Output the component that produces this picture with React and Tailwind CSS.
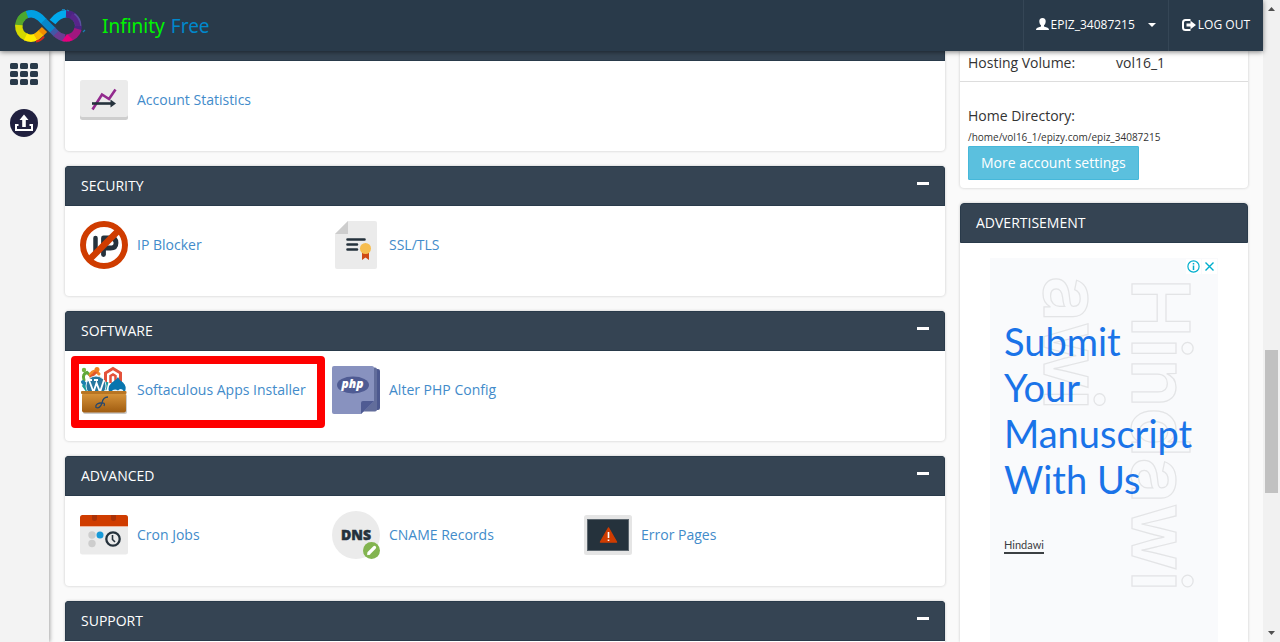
import { useState } from 'react';

const LogoMark = () => (
  <svg width="72" height="36" viewBox="0 0 72 36" fill="none" strokeWidth="7.400" aria-hidden="true">
    <path d="M4.900 19A12.200 12.200 0 0 1 9 9" stroke="#58a52c" />
    <path d="M6.500 12A12.200 12.200 0 0 1 13.500 6.200" stroke="#4ba82e" />
    <path d="M13 6.400Q20 4 26 9.500L30 13.500" stroke="#00a0e3" />
    <path d="M38.500 14Q45 5.500 53 5.800" stroke="#00a9ee" />
    <path d="M29.500 13L39 22.500" stroke="#0787c9" />
    <path d="M38.500 22L42.500 26" stroke="#4158a6" />
    <path d="M42 25.500Q46 29.500 51 30" stroke="#6d3b92" />
    <path d="M4.800 17A12.200 12.200 0 0 0 12.500 29.300" stroke="#d5d900" />
    <path d="M11.500 28.900Q17 31.500 22 29" stroke="#ffed00" />
    <path d="M21.500 29.300Q25 27 27.500 24.500" stroke="#fbba00" />
    <path d="M27 25L30.500 21.500" stroke="#f28c00" />
    <path d="M22 33.500Q27 33 30 28.500" stroke="#d5281b" strokeWidth="2" />
    <path d="M52 5.800Q57 6 60.500 9.400" stroke="#4a2583" />
    <path d="M59 8A12.200 12.200 0 0 1 64.200 18" stroke="#5a50a0" strokeWidth="6.500" />
    <path d="M57 7.500Q63 11 64.200 20" stroke="#57258a" strokeWidth="5" />
    <path d="M64.200 18A12.200 12.200 0 0 1 63 23" stroke="#4a2583" />
    <path d="M64 21A12.200 12.200 0 0 1 54 30" stroke="#a1177f" />
    <path d="M48 33L53 26L59 32Q54 35 48 33Z" fill="#e6007e" stroke="none" />
    <path d="M48 1.500H51M53 2L55 3M69 24L71 22" stroke="#1b7fb5" strokeWidth="1.200" />
  </svg>
);

const UserIcon = () => (
  <svg width="13" height="13" viewBox="0 0 13 13" fill="currentColor" aria-hidden="true">
    <path d="M6.500 0C8.700 0 9.800 1.400 9.700 3.400C9.600 5.400 8.800 6.600 8 7.200V8.400L11.600 9.800C12.600 10.300 13 11 13 12H0C0 11 .4 10.300 1.400 9.800L5 8.400V7.200C4.200 6.600 3.400 5.400 3.300 3.400C3.200 1.400 4.300 0 6.500 0Z" />
  </svg>
);

const LogOutIcon = () => (
  <svg width="14" height="12" viewBox="0 0 14 12" aria-hidden="true">
    <path d="M8.500 1H3.500Q1 1 1 3.500V8.500Q1 11 3.500 11H8.500" fill="none" stroke="currentColor" strokeWidth="2" />
    <path d="M4.500 4.500H8.500V1.800L14 6L8.500 10.200V7.500H4.500Z" fill="currentColor" />
  </svg>
);

const StatsIcon = () => (
  <svg width="48" height="48" viewBox="0 0 48 48" aria-hidden="true">
    <rect y="6" width="48" height="38" rx="2.500" fill="#cecece" />
    <rect y="4" width="48" height="37" rx="2.500" fill="#ebebeb" />
    <path d="M12.500 33.500L22 18.500L29 23L35.500 13.500" fill="none" stroke="#932a8e" strokeWidth="2.600" />
    <path d="M12 27.500H32" stroke="#25323c" strokeWidth="2.600" />
    <path d="M30.500 23.500L36 27.500L30.500 31.500Z" fill="#25323c" />
  </svg>
);

const IpIcon = () => (
  <svg width="48" height="48" viewBox="0 0 48 48" aria-hidden="true">
    <path d="M15.500 17V31" stroke="#25323c" strokeWidth="4.500" strokeLinecap="round" />
    <path d="M23.500 33.500V17H30.500Q36 17 36 22Q36 27 30.500 27H24" fill="none" stroke="#25323c" strokeWidth="4.800" strokeLinecap="round" strokeLinejoin="round" />
    <circle cx="24" cy="24" r="21" fill="none" stroke="#cf3c00" strokeWidth="6" />
    <path d="M38.500 9.500L9.500 38.500" stroke="#cf3c00" strokeWidth="6.500" />
  </svg>
);

const SslIcon = () => (
  <svg width="48" height="48" viewBox="0 0 48 48" aria-hidden="true">
    <path d="M16 0H43Q45 0 45 2V46Q45 48 43 48H5Q3 48 3 46V13Z" fill="#ebebeb" />
    <path d="M16 0V13H3Z" fill="#cdcdcd" />
    <path d="M15.500 18.500H32.500M15.500 23.500H25M15.500 28.500H25" stroke="#25323c" strokeWidth="2.600" strokeLinecap="round" />
    <path d="M30 31H37V39L33.500 36.500L30 39Z" fill="#cf4a14" />
    <circle cx="33.500" cy="27.500" r="5.500" fill="#f6bd4f" />
  </svg>
);

const AppsIcon = () => (
  <svg width="48" height="48" viewBox="0 0 48 48" aria-hidden="true">
    <defs>
      <linearGradient id="box" x1="0" y1="0" x2="0" y2="1">
        <stop offset="0" stopColor="#d8953b" />
        <stop offset="1" stopColor="#a05c10" />
      </linearGradient>
    </defs>
    <g fill="none" strokeLinecap="round">
      <path d="M4 14Q2 8 7 6.500L12 11" stroke="#5fa83a" strokeWidth="3" />
      <path d="M10 9Q14 2 19 8" stroke="#f4892a" strokeWidth="3" />
      <path d="M3 16L8 22" stroke="#1b7fb0" strokeWidth="4" />
      <path d="M17 5L11 11" stroke="#e2572b" strokeWidth="3" />
    </g>
    <circle cx="4" cy="4" r="2.200" fill="#75b743" />
    <circle cx="17" cy="3.500" r="2.500" fill="#ef8021" />
    <path d="M25.500 20V7L33 2.500L40.500 7V17" fill="none" stroke="#e3513b" strokeWidth="3" />
    <path d="M30.500 17V10L33 8.500L35.500 10V17" fill="none" stroke="#e3513b" strokeWidth="2.500" />
    <path d="M3 19L8 26M27 16L25 24" stroke="#1c9a9a" strokeWidth="3" />
    <circle cx="16" cy="20" r="10" fill="#26779f" stroke="#dcebf1" />
    <path d="M9 14L13.500 26L16.500 17L20 26L24 14M8 14H12M14 14H18" fill="none" stroke="#fff" strokeWidth="1.800" />
    <path d="M38 11Q39 14 43 16.500Q47 20 45 26H29Q27 19 34 15Q37 13 38 11Z" fill="#0975ae" />
    <path d="M31 26Q34 22 38 24.500Q42 21 44 26Z" fill="#e7f3fa" />
    <rect x="3" y="28" width="44" height="20" rx="2" fill="#c9c9c9" />
    <rect x="2" y="27" width="44" height="19.500" rx="2" fill="url(#box)" />
    <rect x="1" y="25" width="45.500" height="3" rx="1" fill="#b87523" />
    <path d="M28 31Q23 31 22 37Q20 43 16 41.500Q15 38 20 37Q26 36 24 40" fill="none" stroke="#27476c" strokeWidth="1.300" />
  </svg>
);

const PhpIcon = () => (
  <svg width="48" height="48" viewBox="0 0 48 48" aria-hidden="true">
    <rect x="8" y="3" width="40" height="41" rx="2" fill="#4d598f" />
    <rect x="5" y="1.500" width="40" height="44" rx="2" fill="#626d9b" />
    <path d="M2 0H40Q42 0 42 2V35L29 48H2Q0 48 0 46V2Q0 0 2 0Z" fill="#8892bf" />
    <path d="M29 48V37Q29 35 31 35H42Z" fill="#4f5b93" />
    <ellipse cx="21" cy="19" rx="16" ry="8.500" fill="#4f5b93" />
    <text x="20.500" y="22" textAnchor="middle" fill="#fff" className="font-['Open_Sans',sans-serif] text-[12px] font-extrabold italic">php</text>
  </svg>
);

const CronIcon = () => (
  <svg width="48" height="48" viewBox="0 0 48 48" aria-hidden="true">
    <rect y="4" width="48" height="39.500" rx="2.500" fill="#ebebeb" />
    <path d="M2.500 4H45.500Q48 4 48 6.500V15H0V6.500Q0 4 2.500 4Z" fill="#cf3c00" />
    <path d="M0 15.500H48" stroke="#efb49b" strokeWidth="1" />
    <path d="M12 4H17V7.500A2.500 2.500 0 0 1 12 7.500ZM31 4H36V7.500A2.500 2.500 0 0 1 31 7.500Z" fill="#a93208" />
    <g fill="#cdcdcd">
      <circle cx="12" cy="24" r="3.700" />
      <circle cx="12" cy="32.500" r="3.700" />
    </g>
    <circle cx="20" cy="24" r="3.500" fill="#189ad8" />
    <circle cx="33" cy="28" r="6.700" fill="none" stroke="#25323c" strokeWidth="2.300" />
    <path d="M32.500 24V28.500L35 31" fill="none" stroke="#25323c" strokeWidth="1.600" />
  </svg>
);

const DnsIcon = () => (
  <svg width="48" height="48" viewBox="0 0 48 48" aria-hidden="true">
    <circle cx="24" cy="24" r="24" fill="#ebebeb" />
    <text x="24" y="28.500" textAnchor="middle" fill="#25323c" stroke="#25323c" strokeWidth="0.500" className="font-['Open_Sans',sans-serif] text-[14px] font-extrabold">DNS</text>
    <circle cx="39.500" cy="39.500" r="8.500" fill="#83b450" />
    <path d="M37 42L42.500 36.500" stroke="#fff" strokeWidth="3.200" strokeLinecap="round" />
    <path d="M35 44.200L36 40.800L38.400 43.200Z" fill="#fff" />
  </svg>
);

const ErrorIcon = () => (
  <svg width="48" height="48" viewBox="0 0 48 48" aria-hidden="true">
    <rect y="4" width="48" height="40" rx="2.500" fill="#e5e5e5" />
    <rect x="3.500" y="8.500" width="41" height="31" fill="#25323c" stroke="#5b656d" />
    <path d="M24.500 17L32.500 31H16.500Z" fill="#cf3c00" stroke="#cf3c00" strokeWidth="1.500" strokeLinejoin="round" />
    <path d="M24.500 21V27M24.500 28.500V30" stroke="#fff" strokeWidth="1.600" />
  </svg>
);

const panels = [
  { title: 'SECURITY', items: [
    { label: 'IP Blocker', icon: IpIcon },
    { label: 'SSL/TLS', icon: SslIcon },
  ] },
  { title: 'SOFTWARE', items: [
    { label: 'Softaculous Apps Installer', icon: AppsIcon, highlighted: true },
    { label: 'Alter PHP Config', icon: PhpIcon },
  ] },
  { title: 'ADVANCED', items: [
    { label: 'Cron Jobs', icon: CronIcon },
    { label: 'CNAME Records', icon: DnsIcon },
    { label: 'Error Pages', icon: ErrorIcon },
  ] },
  { title: 'SUPPORT', items: [] },
];

const PanelItems = ({ items }) => (
  <div className="flex h-[90px] items-start px-[15px] pt-[15px]">
    {items.map((item) => (
      <div key={item.label} className="relative w-[252px]">
        <a href="#" className="flex items-center gap-[9px] text-[#428bca]">
          <item.icon />
          <span>{item.label}</span>
        </a>
        {item.highlighted && (
          <div className="pointer-events-none absolute -top-[10px] -left-[9px] h-[72px] w-[254px] rounded-[4px] border-8 border-[#fe0000]" />
        )}
      </div>
    ))}
  </div>
);

const Panel = ({ title, items }) => {
  const [open, setOpen] = useState(true);

  return (
    <section className="shrink-0 overflow-hidden rounded-[4px] bg-white shadow-[0_0_3px_rgba(0,0,0,0.2)]">
      <header className="flex h-10 items-center justify-between border border-[#293a4a] bg-[#354453] px-[15px] text-white">
        <h2>{title}</h2>
        <button type="button" aria-label={`Toggle ${title}`} onClick={() => setOpen(!open)} className="pb-[6px]">
          <span className="block h-[3px] w-3 bg-white" />
        </button>
      </header>
      {open && <PanelItems items={items} />}
    </section>
  );
};

const Header = () => (
  <header className="relative z-20 flex h-[51px] shrink-0 items-center justify-between bg-[#293a4a] text-white shadow-[0_1px_5px_rgba(0,0,0,0.5)]">
    <a href="#" className="flex items-center gap-4 pl-[14px]">
      <LogoMark />
      <span className="font-[Noto_Sans,sans-serif] text-[19px] leading-6">
        <span className="text-[#00f400]">Infinity</span>
        <span className="ml-[6px] text-[#0088cc]">Free</span>
      </span>
    </a>
    <nav className="flex h-full text-[12px] font-medium">
      <button type="button" className="flex items-center gap-[2px] border-l border-[#354656] px-3 pb-[2px]">
        <UserIcon />
        EPIZ_34087215
        <span className="ml-[11px] border-x-4 border-t-4 border-x-transparent border-t-white" />
      </button>
      <a href="#" className="flex items-center gap-[2px] border-l border-[#354656] px-[13px] pb-[2px]">
        <LogOutIcon />
        LOG OUT
      </a>
    </nav>
  </header>
);

const Sidebar = () => (
  <aside className="relative z-10 flex w-[49px] shrink-0 flex-col items-start gap-6 bg-[#f3f3f3] pt-3 pl-[10px] shadow-[1px_0_4px_rgba(0,0,0,0.35)]">
    <a href="#" aria-label="All features">
      <svg width="28" height="22" viewBox="0 0 28 22" fill="#293a4a">
        {[0, 8, 16].map((y) =>
          [0, 10, 20].map((x) => <rect key={`${x}-${y}`} x={x} y={y} width="8" height="6" rx="1.500" />)
        )}
      </svg>
    </a>
    <a href="#" aria-label="Upload">
      <svg width="28" height="28" viewBox="0 0 28 28">
        <circle cx="14" cy="14" r="14" fill="#20203f" />
        <path d="M14 5.500L18.500 11H15.800V18H12.200V11H9.500Z" fill="#fff" />
        <path d="M8.500 16H6V21H22V16H19.500" fill="none" stroke="#fff" strokeWidth="2" />
      </svg>
    </a>
  </aside>
);

const AccountPanel = () => (
  <section className="shrink-0 rounded-b-[4px] bg-white text-[#333] shadow-[0_0_3px_rgba(0,0,0,0.2)]">
    <table className="w-full">
      <tbody>
        <tr className="border-b border-[#ddd]">
          <th scope="row" className="w-[148px] pt-[2px] pb-2 pl-2 text-left font-normal">Hosting Volume:</th>
          <td className="pt-[2px] pb-2 pl-2">vol16_1</td>
        </tr>
      </tbody>
    </table>
    <div className="px-2 pt-6 pb-2">
      <p>Home Directory:</p>
      <p className="pt-[2px] text-[10px] leading-[18px]">/home/vol16_1/epizy.com/epiz_34087215</p>
      <button type="button" className="rounded-[1px] border border-[#46b8da] bg-[#5bc0de] px-3 py-[6px] font-medium text-white">
        More account settings
      </button>
    </div>
  </section>
);

const AdPanel = () => (
  <section className="flex grow flex-col rounded-t-[4px] bg-white shadow-[0_0_3px_rgba(0,0,0,0.2)]">
    <h2 className="flex h-10 shrink-0 items-center rounded-t-[4px] border border-[#293a4a] bg-[#354453] px-[15px] text-white">
      ADVERTISEMENT
    </h2>
    <div className="relative mx-[30px] mt-[15px] grow overflow-hidden bg-[#f9fafc] px-[14px]">
      <svg className="absolute top-0 left-0" width="228" height="384" viewBox="0 0 228 384" fill="none" stroke="#e3e4e6" strokeWidth="1.200" aria-hidden="true">
        <text transform="translate(142 20) rotate(90)" className="font-[Inter,sans-serif] text-[80px] font-semibold">Hindawi</text>
        <text transform="translate(54 18) rotate(90)" className="font-[Inter,sans-serif] text-[80px] font-semibold">awi</text>
      </svg>
      <div className="absolute top-px right-px flex gap-px">
        <a href="#" aria-label="About this ad" className="bg-white">
          <svg width="15" height="15" viewBox="0 0 15 15" fill="none" stroke="#00aecd" strokeWidth="1.200">
            <circle cx="7.500" cy="7.500" r="5.600" />
            <path d="M7.500 6.500V11M7.500 4V5.500" strokeWidth="1.500" />
          </svg>
        </a>
        <button type="button" aria-label="Close ad" className="bg-white">
          <svg width="15" height="15" viewBox="0 0 15 15" fill="none" stroke="#00aecd" strokeWidth="1.400">
            <path d="M3.500 3.500L11.500 11.500M11.500 3.500L3.500 11.500" />
          </svg>
        </button>
      </div>
      <p className="relative pt-[60px] font-[Lato,sans-serif] text-[38px] leading-[46px] text-[#1a73e8]">
        Submit
        <br />
        Your
        <br />
        Manuscript
        <br />
        With Us
      </p>
      <a href="#" className="relative mt-9 inline-block border-b-2 border-[#3c4043] font-[Lato,sans-serif] text-[11px] leading-[14px] text-[#3c4043]">
        Hindawi
      </a>
    </div>
  </section>
);

const Scrollbar = () => (
  <div className="flex w-[17px] shrink-0 flex-col items-center bg-[#f1f1f1]" aria-hidden="true">
    <svg width="17" height="17" viewBox="0 0 17 17"><path d="M5 11L8.500 7L12 11Z" fill="#505050" /></svg>
    <div className="grow-[333]" />
    <div className="h-[143px] w-[13px] bg-[#c1c1c1]" />
    <div className="grow-[132]" />
    <svg width="17" height="17" viewBox="0 0 17 17"><path d="M5 6L8.500 10L12 6Z" fill="#505050" /></svg>
  </div>
);

const App = () => (
  <div className="flex h-screen overflow-hidden bg-[#fafafa] font-['Open_Sans',sans-serif] text-[14px] leading-5">
    <div className="flex min-w-0 grow flex-col">
      <Header />
      <div className="flex min-h-0 grow">
        <Sidebar />
        <main className="flex min-w-0 grow gap-[15px] overflow-hidden pr-[15px] pl-4">
          <div className="flex grow flex-col gap-[15px]">
            <section className="shrink-0 rounded-b-[4px] bg-white shadow-[0_0_3px_rgba(0,0,0,0.2)]">
              <div className="h-[10px] border-x border-b border-[#293a4a] bg-[#354453]" />
              <PanelItems items={[{ label: 'Account Statistics', icon: StatsIcon }]} />
            </section>
            {panels.map((panel) => (
              <Panel key={panel.title} {...panel} />
            ))}
          </div>
          <div className="flex w-[288px] shrink-0 flex-col gap-[15px]">
            <AccountPanel />
            <AdPanel />
          </div>
        </main>
      </div>
    </div>
    <Scrollbar />
  </div>
);

export default App;
